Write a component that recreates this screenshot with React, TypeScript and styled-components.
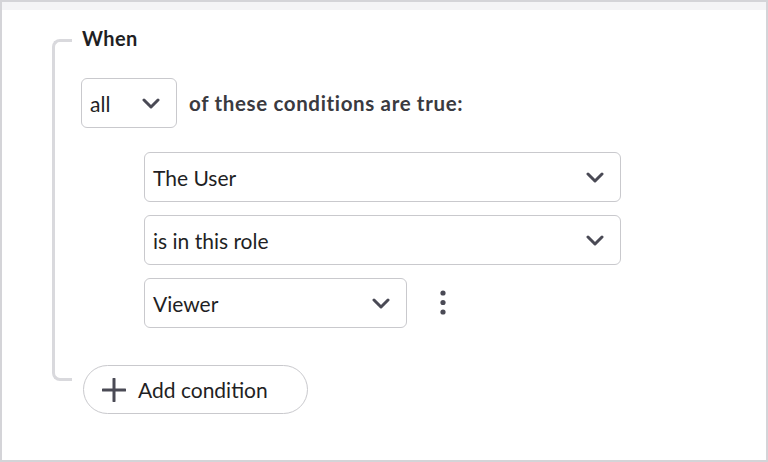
import React from 'react';
import styled, { createGlobalStyle } from 'styled-components';

const GlobalStyle = createGlobalStyle`
  html, body {
    margin: 0;
    padding: 0;
    background: #ffffff;
  }
  body {
    font-family: Lato, "Open Sans", sans-serif;
    color: #222228;
  }
`;

const Frame = styled.div`
  box-sizing: border-box;
  width: 768px;
  height: 462px;
  border: 2px solid #d4d4d8;
  display: flex;
  flex-direction: column;
  background: #ffffff;
`;

const TopBand = styled.div`
  height: 8px;
  background: #f4f4f6;
`;

const Group = styled.section`
  position: relative;
  margin: 16px 0 0 50px;
  padding-left: 29px;
  display: flex;
  flex-direction: column;

  &::before {
    content: '';
    position: absolute;
    left: 0;
    top: 13px;
    bottom: 33px;
    width: 17px;
    border: 3px solid #d9d9dd;
    border-right: none;
    border-radius: 8px 0 0 8px;
  }
`;

const Heading = styled.div`
  font-size: 20px;
  font-weight: 700;
  letter-spacing: 0.4px;
  line-height: 24px;
  height: 24px;
  margin-left: 1px;
  color: #1f1f24;
`;

const MatchRow = styled.div`
  display: flex;
  align-items: center;
  gap: 12px;
  margin-top: 28px;
`;

const MatchLabel = styled.span`
  font-size: 20.5px;
  font-weight: 700;
  letter-spacing: 0.65px;
  color: #3a3a40;
`;

const Select = styled.div<{ $width: number }>`
  box-sizing: border-box;
  width: ${(p) => p.$width}px;
  height: 50px;
  border: 1px solid #c9c9cd;
  border-radius: 6px;
  background: #fff;
  display: flex;
  align-items: center;
  justify-content: space-between;
  padding: 0 16px 0 8px;
  font-size: 21px;
  color: #1f1f24;
`;

const Conditions = styled.div`
  display: flex;
  flex-direction: column;
  gap: 13px;
  margin: 24px 0 0 63px;
`;

const ConditionRow = styled.div`
  display: flex;
  align-items: center;
  gap: 26px;
`;

const MoreButton = styled.div`
  width: 20px;
  height: 30px;
  display: flex;
  align-items: center;
  justify-content: center;
`;

const AddButton = styled.button`
  box-sizing: border-box;
  align-self: flex-start;
  margin: 37px 0 0 2px;
  width: 225px;
  height: 49px;
  border: 1px solid #c9c9cd;
  border-radius: 25px;
  background: #fff;
  display: flex;
  align-items: center;
  gap: 12px;
  padding: 0 0 0 18px;
  font-family: Lato, "Open Sans", sans-serif;
  font-size: 21px;
  color: #1f1f24;
`;

const Chevron = () => (
  <svg width="18" height="11" viewBox="0 0 18 11" fill="none">
    <path d="M2 2l7 7 7-7" stroke="#4a4a55" strokeWidth="3" strokeLinecap="round" strokeLinejoin="round" />
  </svg>
);

const Kebab = () => (
  <svg width="6" height="26" viewBox="0 0 6 26" fill="#4a4a55">
    <circle cx="3" cy="3" r="2.6" />
    <circle cx="3" cy="12.5" r="2.6" />
    <circle cx="3" cy="22" r="2.6" />
  </svg>
);

const Plus = () => (
  <svg width="24" height="24" viewBox="0 0 24 24" fill="none">
    <path d="M12 1v22M1 12h22" stroke="#4a4a55" strokeWidth="3" strokeLinecap="round" />
  </svg>
);

const App = () => (
  <>
    <GlobalStyle />
    <Frame>
      <TopBand />
      <Group>
        <Heading>When</Heading>
        <MatchRow>
          <Select $width={96}>
            <span>all</span>
            <Chevron />
          </Select>
          <MatchLabel>of these conditions are true:</MatchLabel>
        </MatchRow>
        <Conditions>
          <Select $width={477}>
            <span>The User</span>
            <Chevron />
          </Select>
          <Select $width={477}>
            <span>is in this role</span>
            <Chevron />
          </Select>
          <ConditionRow>
            <Select $width={263}>
              <span>Viewer</span>
              <Chevron />
            </Select>
            <MoreButton>
              <Kebab />
            </MoreButton>
          </ConditionRow>
        </Conditions>
        <AddButton>
          <Plus />
          Add condition
        </AddButton>
      </Group>
    </Frame>
  </>
);

export default App;
